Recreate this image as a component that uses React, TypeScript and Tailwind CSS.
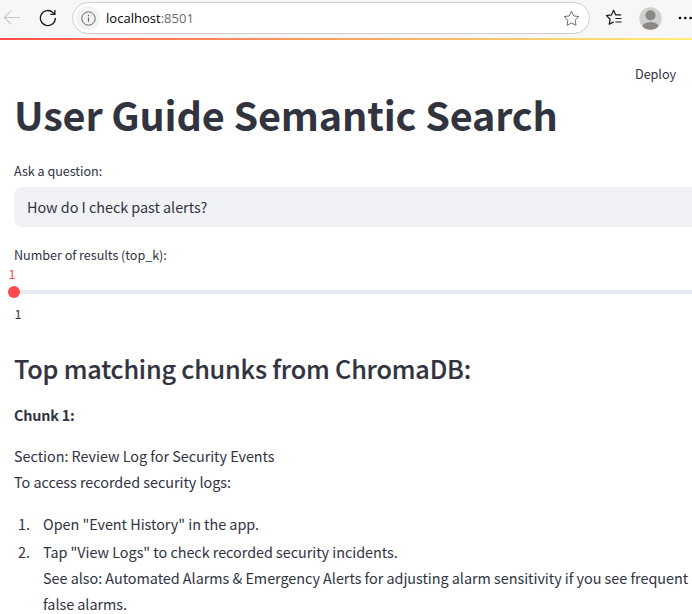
import React from "react";

const star =
  "M8.5 1.2l2.2 4.7 5.1.7-3.7 3.6.9 5.1-4.5-2.4-4.5 2.4.9-5.1L1.200 6.600l5.100-.7z";

function BrowserBar() {
  return (
    <header className="flex h-[38px] w-[692px] items-start overflow-hidden bg-[#f7f7f7] font-['Open_Sans',sans-serif]">
      <svg className="mt-[9px] ml-[3px] h-[17px] w-[18px] shrink-0" viewBox="0 0 18 17" fill="none" stroke="#c6c6c6" strokeWidth="1.1">
        <path d="M17 8.500H1.500M8.200 1.700L1.300 8.500l6.900 6.800" />
      </svg>
      <svg className="mt-[9px] ml-[18px] h-[18px] w-[18px] shrink-0" viewBox="0 0 18 18" fill="none" stroke="#1b1b1b" strokeWidth="1.3">
        <path d="M16.400 9a7.500 7.500 0 1 1-2.300-5.400l1.700 1.700M15.900 1v4.400h-4.500" />
      </svg>
      <div className="mt-[2px] ml-[15px] flex h-8 w-[518px] shrink-0 items-center rounded-full border border-[#cfcfcf] bg-white pl-[3px] pr-[9.500px]">
        <span className="flex size-6 items-center justify-center rounded-full bg-[#f3f3f3]">
          <svg className="size-[15px]" viewBox="0 0 15 15" fill="none" stroke="#686868">
            <circle cx="7.500" cy="7.500" r="6.700" strokeWidth="1" />
            <path d="M7.500 6.500v4.200M7.500 4v1.300" strokeWidth="1.200" />
          </svg>
        </span>
        <span className="ml-[6px] text-[13px] leading-5 tracking-[0.02px] text-black">
          localhost<span className="text-[#6b6b6b]">:8501</span>
        </span>
        <svg className="ml-auto size-[17px]" viewBox="0 0 17 17" fill="none" stroke="#707070" strokeWidth="1" strokeLinejoin="round">
          <path d={star} />
        </svg>
      </div>
      <svg className="mt-[9px] ml-[15px] h-[17px] w-[18px] shrink-0" viewBox="0 0 18 17" fill="none" stroke="#1b1b1b" strokeWidth="1.200" strokeLinejoin="round">
        <path d="M8.600 12.900l-4.400 2.400.9-5.100L1.400 6.600l5.100-.7 2.100-4.700 2.100 4.700h5.500M10.400 9.500h6.100M10.400 13h6.100" />
      </svg>
      <svg className="mt-[7px] ml-[15.500px] size-[23px] shrink-0" viewBox="0 0 23 23">
        <defs>
          <clipPath id="avatar"><circle cx="11.500" cy="11.500" r="11.200" /></clipPath>
        </defs>
        <circle cx="11.500" cy="11.500" r="11.200" fill="#d2d0ce" />
        <g clipPath="url(#avatar)" fill="#8a8784">
          <circle cx="11.500" cy="8.300" r="5.100" />
          <ellipse cx="11.500" cy="20.500" rx="8.500" ry="5.600" />
        </g>
      </svg>
      <svg className="mt-[16px] ml-[16.500px] h-[4px] w-[14px] shrink-0" viewBox="0 0 14 4">
        <circle cx="2" cy="2" r="1.300" />
        <circle cx="7.300" cy="2" r="1.300" />
        <circle cx="12.600" cy="2" r="1.300" />
      </svg>
    </header>
  );
}

export default function App() {
  return (
    <div className="h-[614px] w-[692px] overflow-hidden bg-white font-['Noto_Sans_CJK_SC',sans-serif] text-[14.4px] tracking-[-0.03px] text-[#31333f]">
      <BrowserBar />
      <div className="h-[2px] bg-linear-to-r from-[#ff4b4b] to-[#ffee78]" />
      <div className="flex h-[43px] justify-end pt-[24px] pr-[16px]">
        <span className="text-[12.6px] leading-5">Deploy</span>
      </div>
      <main className="pl-[14px] whitespace-nowrap">
        <h1 className="h-[78px] text-[39.6px] leading-[62px] font-bold tracking-[-0.16px]">User Guide Semantic Search</h1>
        <div className="h-[26px] text-[12.6px] leading-5">Ask a question:</div>
        <div className="h-[40px] rounded-l-lg bg-[#f0f2f6] pl-[13px] leading-[40px]">How do I check past alerts?</div>
        <div className="mt-[18px] h-[20px] text-[12.6px] leading-5">Number of results (top_k):</div>
        <div className="relative h-[60px]">
          <div className="-ml-[5.500px] h-[20px] text-[12.600px] leading-[18px] text-[#ff4b4b]">1</div>
          <div className="mt-[5px] h-[4px] bg-[#e6eaf1]" />
          <div className="absolute top-[21px] -left-[6px] size-3 rounded-full bg-[#ff4b4b]" />
          <div className="mt-[10px] pl-[0.500px] text-[12.600px] leading-5">1</div>
        </div>
        <h2 className="mt-[25px] h-[52px] text-[25.2px] leading-[36px] font-medium tracking-[-0.18px] [-webkit-text-stroke:0.15px_#31333f]">Top matching chunks from ChromaDB:</h2>
        <p className="h-[41px] leading-[26px] font-bold tracking-[-0.22px]">Chunk 1:</p>
        <p className="h-[68px] leading-[26px]">
          Section: Review Log for Security Events
          <br />
          To access recorded security logs:
        </p>
        <ol className="leading-[26px]">
          <li className="flex h-[28px]">
            <span className="w-[29px] pl-[4px]">1.</span>
            <span>Open "Event History" in the app.</span>
          </li>
          <li className="flex">
            <span className="w-[29px] pl-[4px]">2.</span>
            <span>
              Tap "View Logs" to check recorded security incidents.
              <br />
              See also: Automated Alarms &amp; Emergency Alerts for adjusting alarm sensitivity if you see frequent
              <br />
              false alarms.
            </span>
          </li>
        </ol>
      </main>
    </div>
  );
}
